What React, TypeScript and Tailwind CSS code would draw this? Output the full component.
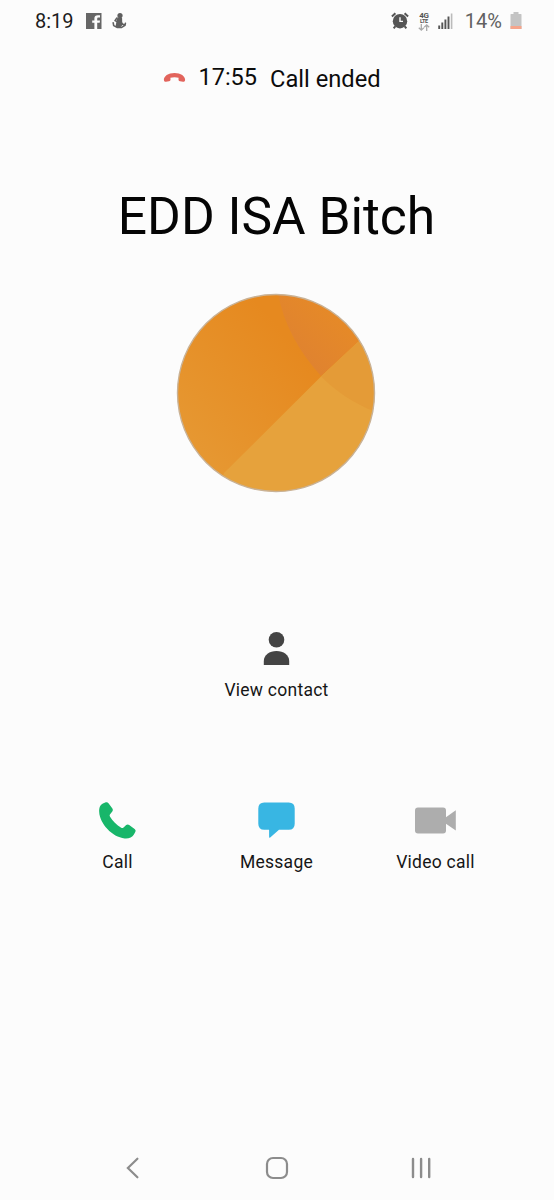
import React from 'react';

const StatusBar = () => {
  return (
    <div className="flex h-[42px] items-center pl-[35px] pr-[32px] text-xl leading-none">
      <span className="text-[#1c1c1c]">8:19</span>
      <svg className="ml-3 shrink-0" width="16" height="16" viewBox="0 0 16 16">
        <path d="M0 0H15.5V16H11.2V9.8H13.7L14 7.4H11.2V5.8C11.2 4.9 11.6 4.5 12.5 4.5H14V2.2H11.9C9.7 2.2 8.4 3.4 8.4 5.4V7.4H6.2V9.8H8.4V16H0Z" fill="#666" />
      </svg>
      <svg className="ml-[10px] shrink-0" width="15" height="16" viewBox="0 0 15 16">
        <g fill="#5f5f5f" stroke="#5f5f5f" strokeLinecap="round" strokeLinejoin="round">
          <circle cx="8" cy="2.6" r="2.6" stroke="none" />
          <path d="M6 5.2L9.4 5.2L9.5 9L10.4 11.2L8 13.4H4.2L5 9.6Z" strokeWidth="1.4" />
          <path d="M4.9 5L3 7.6L5.4 8.8M1.2 9.8L1.7 12.6L5 14.4H9.7L13 12.4L13.4 10.2M10.3 11L12.6 12" fill="none" strokeWidth="1.6" />
        </g>
      </svg>

      <svg className="ml-auto shrink-0" width="18" height="18" viewBox="0 0 18 18">
        <circle cx="9" cy="9.2" r="7.2" fill="#555" />
        <path d="M.9 4.4L4.4 1.2M13.6 1.2L17.1 4.4M4.2 14.3L2.7 16.4M13.8 14.3L15.3 16.4" stroke="#555" strokeWidth="2" />
        <path d="M9 5.2V9.4H12" fill="none" stroke="#fcfcfc" strokeWidth="1.4" />
      </svg>
      <div className="ml-[9px] flex w-[12px] shrink-0 flex-col items-center text-[#555]">
        <span className="text-[8px] font-bold leading-[7px] tracking-[-0.4px]">4G</span>
        <span className="text-[5.5px] font-bold leading-[5px] tracking-[-0.3px]">LTE</span>
        <svg width="12" height="7" viewBox="0 0 12 7">
          <path d="M3.3 0V6M.8 3.7L3.3 6.1L5.8 3.7M8.7 7V1M6.2 3.3L8.7 .9L11.2 3.3" fill="none" stroke="#aaa" strokeWidth="1.3" />
        </svg>
      </div>
      <svg className="ml-2 shrink-0" width="15" height="16" viewBox="0 0 15 16">
        <path d="M1.2 12.5V16M4.3 9.5V16M7.4 6.5V16M10.5 3.5V16" stroke="#555" strokeWidth="1.9" />
        <path d="M13.6 .5V16" stroke="#bbb" strokeWidth="1.6" />
      </svg>
      <span className="ml-3 text-[#616161]">14%</span>
      <svg className="ml-2 shrink-0" width="12" height="18" viewBox="0 0 12 18">
        <path d="M3.5 0H8.5V2H11Q11.5 2 11.5 2.5V16.5Q11.5 17 11 17H1Q.5 17 .5 16.5V2.5Q.5 2 1 2H3.5Z" fill="#c4c4c4" />
        <path d="M.5 14H11.5V16.5Q11.5 17 11 17H1Q.5 17 .5 16.5Z" fill="#f5a58c" />
      </svg>
    </div>
  );
};

const CallStatus = () => {
  return (
    <div className="flex h-[70px] items-start pl-[163px] text-[#0c0c0c]">
      <svg className="mt-[30px] shrink-0" width="23" height="11" viewBox="0 0 23 11">
        <path d="M.9 8.1C.5 4.3 5.4 1 11.5 1S22.5 4.3 22.1 8.1C22 9.5 21.2 10 20 9.8L17 9.3C15.8 9.1 15.4 8.4 15.5 7.3L15.6 5.8C13.2 4.9 9.8 4.9 7.4 5.8L7.5 7.3C7.6 8.4 7.2 9.1 6 9.3L3 9.8C1.8 10 1 9.5 .9 8.1Z" fill="#e2645c" />
      </svg>
      <span className="ml-[12.5px] mt-5 w-[60px] text-[23.5px] leading-[30px]">17:55</span>
      <span className="ml-[11.5px] mt-[22px] whitespace-nowrap text-[23.7px] leading-[30px]">Call ended</span>
    </div>
  );
};

const Avatar = () => {
  return (
    <svg width="200" height="200" viewBox="0 0 200 200">
      <defs>
        <clipPath id="face">
          <circle cx="100" cy="100" r="98.5" />
        </clipPath>
        <linearGradient id="base" gradientUnits="userSpaceOnUse" x1="20" y1="150" x2="125" y2="60">
          <stop offset="0" stopColor="#e69731" />
          <stop offset="1" stopColor="#e6891f" />
        </linearGradient>
        <linearGradient id="corner" gradientUnits="userSpaceOnUse" x1="125" y1="60" x2="165" y2="20">
          <stop offset="0" stopColor="#e0832f" />
          <stop offset="1" stopColor="#e68a27" />
        </linearGradient>
      </defs>
      <g clipPath="url(#face)">
        <rect width="200" height="200" fill="url(#base)" />
        <path d="M102 0C107 29 122 58 145 83L200 32V0Z" fill="url(#corner)" />
        <path d="M200 32L145 83.5L48 180L40 200H200Z" fill="#e6a23c" />
        <path d="M145 83.5C160 98 176 110 200 119V32Z" fill="#e49b37" />
      </g>
      <circle cx="100" cy="100" r="98.5" fill="none" stroke="#c9b296" strokeWidth="1.4" />
    </svg>
  );
};

const PersonIcon = () => (
  <svg width="28" height="36" viewBox="0.5 0 28 36">
    <circle cx="14" cy="9.7" r="7.8" fill="#444" />
    <path d="M1.3 35V31C1.3 25 7 21 14 21S26.7 25 26.7 31V35Z" fill="#444" />
  </svg>
);

const PhoneIcon = () => (
  <svg width="38" height="38" viewBox="0.3 -0.3 38 38">
    <path d="M4.2 2.3L7.1 1Q8.8.5 9.8 2L13.7 7.2Q14.8 8.9 13.6 10.3L11.2 13.1Q10.6 14 11.2 15.1C13.8 19.5 18 23.6 22.5 26.4Q23.8 27.1 24.8 26.2L27.5 23.8Q28.9 22.7 30.5 23.7L35.9 27.6Q37.5 28.7 36.7 30.4L35.2 33.1C33.5 36.3 30 37.4 26 37.1C13.5 36 1.2 22.2.5 11C.3 7 1 4 4.2 2.3Z" fill="#18b66a" />
  </svg>
);

const MessageIcon = () => (
  <svg width="38" height="38" viewBox="0.5 -0.4 38 38">
    <path d="M6.8 1.2H31.2Q37.2 1.2 37.2 7.2V22.4Q37.2 28.4 31.2 28.4H21.5L12.7 36Q11.6 36.8 11.6 35.4V28.4H6.8Q.8 28.4 .8 22.4V7.2Q.8 1.2 6.8 1.2Z" fill="#38b6e3" />
  </svg>
);

const VideoIcon = () => (
  <svg width="42" height="38" viewBox="0.4 -0.4 42 38">
    <rect x=".4" y="6" width="31" height="26" rx="3" fill="#adadad" />
    <path d="M31 16L41.2 8.8V29.2L31 22Z" fill="#adadad" />
  </svg>
);

const actions = [
  { label: 'Call', icon: <PhoneIcon /> },
  { label: 'Message', icon: <MessageIcon /> },
  { label: 'Video call', icon: <VideoIcon /> },
];

const NavBar = () => {
  return (
    <div className="mt-auto flex h-16 items-center justify-between pl-[125px] pr-[122px]">
      <svg width="14" height="24" viewBox="0 0 14 24">
        <path d="M12.4 2.7L2.9 12L12.4 21.3" fill="none" stroke="#8c8c8c" strokeWidth="2.2" strokeLinecap="round" />
      </svg>
      <svg className="ml-1" width="24" height="24" viewBox="0 0 24 24">
        <rect x="2" y="2" width="20" height="20" rx="6" fill="none" stroke="#8c8c8c" strokeWidth="2.2" />
      </svg>
      <svg width="22" height="24" viewBox="0 0 22 24">
        <path d="M3 3V21M11.1 3V21M19.2 3V21" stroke="#8c8c8c" strokeWidth="2.4" strokeLinecap="round" />
      </svg>
    </div>
  );
};

const App = () => {
  return (
    <div className="flex h-[1200px] w-[554px] flex-col overflow-hidden bg-[#fcfcfc] font-[Roboto,sans-serif]">
      <StatusBar />
      <CallStatus />
      <h1 className="mt-[75px] h-[60px] whitespace-nowrap pr-px text-center text-[51.5px] leading-[60px] text-[#050505]">EDD ISA Bitch</h1>
      <div className="mt-[46px] flex justify-center pr-[2px]">
        <Avatar />
      </div>
      <div className="mt-[137px] flex flex-col items-center pr-px">
        <PersonIcon />
        <span className="mt-3 text-[17.5px] leading-6 tracking-[0.25px] text-[#161616]">View contact</span>
      </div>
      <div className="mt-[99px] grid grid-cols-[159px_159px_159px] justify-center pr-px">
        {actions.map((action) => (
          <div key={action.label} className="flex flex-col items-center">
            {action.icon}
            <span className="mt-[11px] text-[17.5px] leading-6 tracking-[0.25px] text-[#161616]">{action.label}</span>
          </div>
        ))}
      </div>
      <NavBar />
    </div>
  );
};

export default App;
